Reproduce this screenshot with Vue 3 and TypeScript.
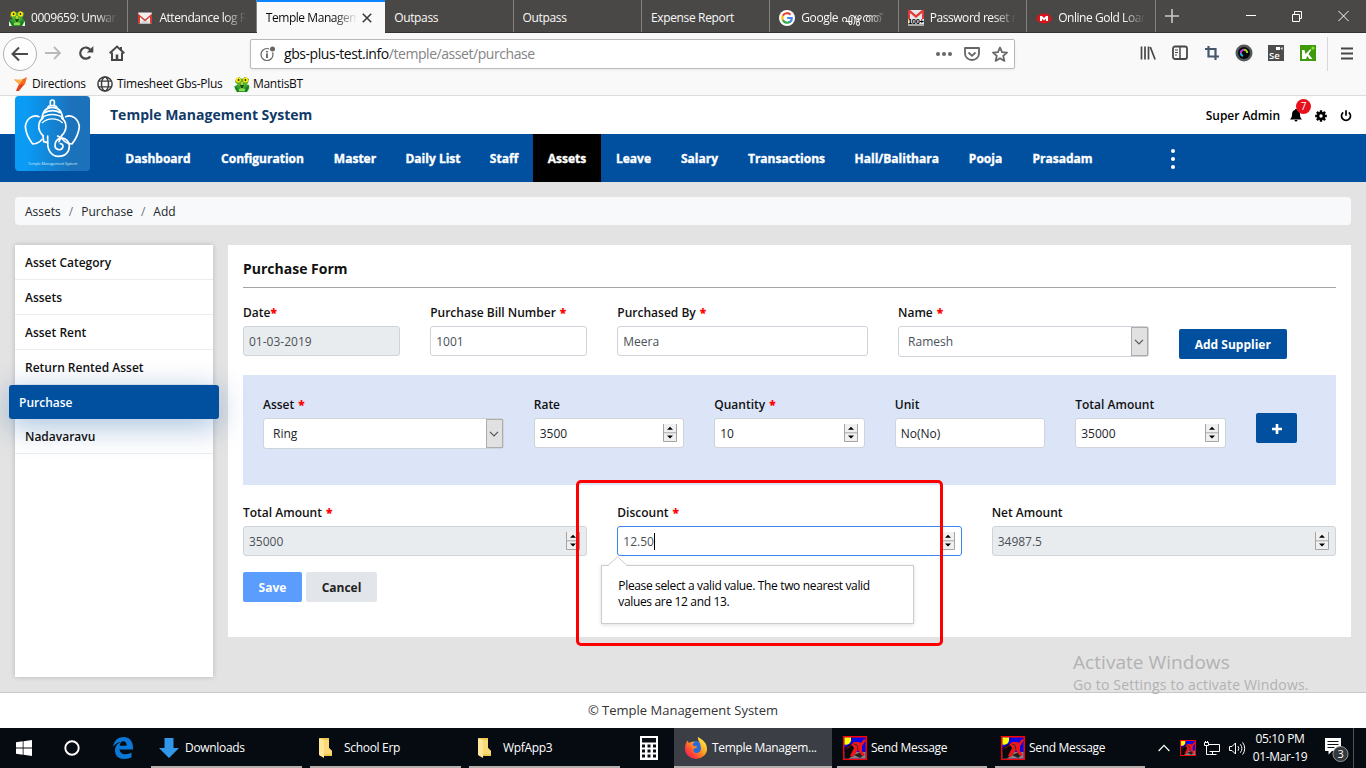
<script setup lang="ts">
interface Tab { title: string; icon?: string; active?: boolean }
const tabs: Tab[] = [
  { title: '0009659: Unwanted', icon: 'mantis' },
  { title: 'Attendance log Report', icon: 'gmail' },
  { title: 'Temple Management', active: true },
  { title: 'Outpass' },
  { title: 'Outpass' },
  { title: 'Expense Report' },
  { title: 'Google എഴുത്ത്', icon: 'google' },
  { title: 'Password reset req', icon: 'gmail100' },
  { title: 'Online Gold Loan', icon: 'muthoot' },
]
const nav = ['Dashboard', 'Configuration', 'Master', 'Daily List', 'Staff', 'Assets', 'Leave', 'Salary', 'Transactions', 'Hall/Balithara', 'Pooja', 'Prasadam']
const side = ['Asset Category', 'Assets', 'Asset Rent', 'Return Rented Asset', 'Purchase', 'Nadavaravu']
interface Field { label: string; value: string; req?: boolean; kind: 'text' | 'number' | 'select'; disabled?: boolean; span: string; tight?: boolean; focus?: boolean }
const top: Field[] = [
  { label: 'Date', value: '01-03-2019', req: true, tight: true, kind: 'text', disabled: true, span: 'c2' },
  { label: 'Purchase Bill Number', value: '1001', req: true, kind: 'text', span: 'c2' },
  { label: 'Purchased By', value: 'Meera', req: true, kind: 'text', span: 'c3' },
  { label: 'Name', value: 'Ramesh', req: true, kind: 'select', span: 'c3' },
]
const items: Field[] = [
  { label: 'Asset', value: 'Ring', req: true, kind: 'select', span: 'c3' },
  { label: 'Rate', value: '3500', kind: 'number', span: 'c2' },
  { label: 'Quantity', value: '10', req: true, kind: 'number', span: 'c2' },
  { label: 'Unit', value: 'No(No)', kind: 'text', span: 'c2' },
  { label: 'Total Amount', value: '35000', kind: 'number', span: 'c2' },
]
const totals: Field[] = [
  { label: 'Total Amount', value: '35000', req: true, kind: 'number', disabled: true, span: 'c4' },
  { label: 'Discount', value: '12.50', req: true, kind: 'number', focus: true, span: 'c4' },
  { label: 'Net Amount', value: '34987.5', kind: 'number', disabled: true, span: 'c4' },
]
const rows = [
  { cls: 'row-top', fields: top },
  { cls: 'row-items', fields: items },
  { cls: 'row-totals', fields: totals },
]
</script>

<template>
  <div class="screen">
    <svg width="0" height="0" class="defs">
      <defs>
        <symbol id="mantis" viewBox="0 0 16 16">
          <path d="M0 16l1-6 4-2h6l4 1 1 7z" fill="#2f9e2c" /><path d="M2 3l3-2 3 2 3-2 4 2-1 4-3 3-3 4-3-4-4-4z" fill="#58b030" />
          <path d="M0 10l3 2 2 4H3zM15 9l-3 3-1 4h2z" fill="#157a25" /><path d="M6 9l2 5 2-5z" fill="#174f16" />
          <path d="M0 11l3 5H0zM16 11l-3 5h3z" fill="#e9f7df" /><path d="M5 13l3-1 3 1v2H5z" fill="#8fdc4e" />
          <circle cx="4.400" cy="4" r="2.500" fill="#ffe600" /><circle cx="11.600" cy="4" r="2.500" fill="#ffe600" />
          <circle cx="4.600" cy="4" r=".9" fill="#222" /><circle cx="11.400" cy="4" r=".9" fill="#222" /><path d="M7 6h2l-.5 3h-1z" fill="#d3e02a" />
        </symbol>
        <symbol id="gmail" viewBox="0 0 16 16">
          <rect x="1" y="2.500" width="14" height="11" rx="1" fill="#f1f1f1" /><path d="M3 13.500L8 8l5 5.500z" fill="#d8d8d8" />
          <path d="M1 13.500V3.500L8 9.500l7-6v10h-2V7L8 11.200 3 7v6.500z" fill="#d93a2f" />
        </symbol>
        <symbol id="google" viewBox="0 0 16 16">
          <circle cx="8" cy="8" r="8" fill="#fff" />
          <g fill="none" stroke-width="2.200"><path d="M3.800 5.800A4.800 4.800 0 0 1 11.500 4.700" stroke="#ea4335" /><path d="M3.900 10.200a4.800 4.800 0 0 1 0-4.500" stroke="#fbbc05" /><path d="M3.900 10a4.800 4.800 0 0 0 7.300 1.700" stroke="#34a853" /><path d="M11 11.900A4.800 4.800 0 0 0 12.800 8H8.200" stroke="#4285f4" /></g>
        </symbol>
        <symbol id="gmail100" viewBox="0 0 16 16">
          <rect width="16" height="16" fill="#e6e6e6" /><path d="M0 9V0h2l6 5 6-5h2v9h-2V3L8 8 2 3v6z" fill="#df3a36" />
          <rect y="14" width="16" height="2" fill="#a9a9a9" />
          <text x="0" y="13.500" font-size="7.500" font-weight="700" font-family="Liberation Sans, sans-serif" textLength="16" fill="#000">100+</text>
        </symbol>
        <symbol id="muthoot" viewBox="0 0 16 16">
          <ellipse cx="8" cy="8.500" rx="7.500" ry="5" fill="#d8141c" /><path d="M4 11V6h2l2 2 2-2h2v5h-2V8.800L8 10.600 6 8.800V11z" fill="#fff" />
        </symbol>
        <symbol id="folder" viewBox="0 0 16 22">
          <path d="M2 1h9v10l3 3v5H2z" fill="#f2c94f" /><path d="M1 1l5 2v18l-5-3z" fill="#ffe79a" /><path d="M6 3h5v8l3 3v3H6z" fill="#fad976" />
        </symbol>
        <symbol id="sendmsg" viewBox="0 0 24 24">
          <rect x=".75" y=".75" width="22.500" height="22.500" fill="#0808e8" stroke="#f00" stroke-width="1.500" />
          <path d="M1.500 16h21v6.500h-21z" fill="#858585" /><path d="M1.500 12l6-4 5 4-1 7-6 3.500h-4z" fill="#080808" /><path d="M11 19l7-3 3 3-4 3z" fill="#222" />
          <path d="M1.500 1.500H8v3a5 5 0 0 1-6.500 4z" fill="#ff0" />
          <path d="M2 13l5-3 4-4h5l2 1 3-4 2 1-4 6 0 5 3 4-3 1-4-6-5 7-3-1 4-8-2-3-4 3z" fill="#f21515" />
          <path d="M11 8l3 1 1 5" stroke="#333" stroke-width="1" fill="none" />
        </symbol>
      </defs>
    </svg>

    <!-- browser tabs -->
    <div class="tabbar">
      <div v-for="(t, i) in tabs" :key="i" class="tab" :class="{ active: t.active }">
        <svg v-if="t.icon" width="16" height="16"><use :href="'#' + t.icon" /></svg>
        <span class="tab-title">{{ t.title }}</span>
        <svg v-if="t.active" class="tab-x" width="10" height="10" viewBox="0 0 10 10"><path d="M.8.8l8.400 8.400M9.200.8L.8 9.200" stroke="#3c3c3c" stroke-width="1.600" /></svg>
      </div>
      <svg class="plus" width="14" height="14" viewBox="0 0 14 14"><path d="M7 0v14M0 7h14" stroke="#c9c9c8" stroke-width="1.600" /></svg>
      <svg class="win-btns" width="104" height="12" viewBox="0 0 104 12" fill="none" stroke="#fff"><path d="M0 5.500h10" /><path d="M46.500 4.500h7v7h-7zM48.500 4v-2.500h7v7H54" /><path d="M92.500 1l10 10M102.500 1l-10 10" /></svg>
    </div>

    <!-- browser toolbar -->
    <div class="toolbar">
      <div class="back"><svg width="18" height="16" viewBox="0 0 18 16" fill="none" stroke="#4a4a4a" stroke-width="2"><path d="M1.500 8H17M8 1.500L1.500 8 8 14.500" /></svg></div>
      <svg class="fwd" width="17" height="14" viewBox="0 0 17 14" fill="none" stroke="#b9b9ba" stroke-width="1.800"><path d="M0 7h15M9 1l6 6-6 6" /></svg>
      <svg class="reload" width="16" height="16" viewBox="0 0 16 16"><path d="M12.300 11.500A5.600 5.600 0 1 1 12.500 5" fill="none" stroke="#474747" stroke-width="2.200" /><path d="M15.300 1v6.500H8.800z" fill="#474747" /></svg>
      <svg class="home" width="16" height="16" viewBox="0 0 16 16" fill="none" stroke="#474747"><path d="M.7 8.200L8 1.500l7.300 6.700" stroke-width="2" /><path d="M3 7.500V15h10V7.500M12 2v3" stroke-width="2" /><path d="M8 9.500V15" stroke-width="2.600" /></svg>
      <div class="url">
        <svg class="info" width="16" height="16" viewBox="0 0 16 16"><circle cx="7" cy="8.500" r="6" fill="none" stroke="#666" stroke-width="1.200" /><path d="M7 7.500V12M7 5v1.400" stroke="#555" stroke-width="1.700" /><circle cx="12.500" cy="3" r="3.400" fill="#fff" /><circle cx="12.500" cy="3" r="2.500" fill="#666" /></svg>
        <span class="addr"><b>gbs-plus-test.info</b>/temple/asset/purchase</span>
        <svg class="url-icons" width="72" height="16" viewBox="0 0 72 16" fill="none" stroke="#666" stroke-width="1.800"><g fill="#666" stroke="none"><circle cx="2" cy="8" r="2" /><circle cx="8" cy="8" r="2" /><circle cx="14" cy="8" r="2" /></g><path d="M29 2h14v5.500a7 6.500 0 0 1-14 0z" stroke-linejoin="round" /><path d="M32.500 6.500L36 9.800l3.500-3.300" /><path d="M64 1.500l2 4.700 5 .4-3.800 3.300 1.200 5L64 12.200l-4.400 2.700 1.200-5L57 6.600l5-.4z" stroke-linejoin="round" /></svg>
      </div>
      <div class="ext">
        <svg width="16" height="16" viewBox="0 0 16 16" stroke="#474747" stroke-width="1.700" fill="none"><path d="M1.500 1.500v13M5 1.500v13M8.500 1.500v13M10.300 2l4.800 12.500" /></svg>
        <svg width="16" height="16" viewBox="0 0 16 16" stroke="#474747" fill="none"><rect x="1" y="1.500" width="14" height="12.500" rx="2" stroke-width="1.800" /><path d="M8 2v12" stroke-width="1.500" /><path d="M3 5h3M3 7.500h3M3 10h2" stroke-width="1" /></svg>
        <svg width="16" height="16" viewBox="0 0 16 16" stroke="#47586b" fill="none" stroke-width="2.200"><path d="M1 4h10.500v11M4.500 1v10.500H15" /></svg>
        <svg width="18" height="18" viewBox="0 0 18 18"><circle cx="9" cy="9" r="8.500" fill="#55585a" /><circle cx="9" cy="9" r="6" fill="#07090b" /><path d="M5.800 9A3.200 3.200 0 0 1 9 5.800" stroke="#bb39c8" stroke-width="2" fill="none" /><path d="M9 5.800A3.200 3.200 0 0 1 12.200 9" stroke="#a6cf25" stroke-width="2" fill="none" /><path d="M5.800 9A3.200 3.200 0 0 0 8 12" stroke="#24a9e0" stroke-width="2" fill="none" /></svg>
        <svg width="16" height="16" viewBox="0 0 16 16"><rect width="16" height="16" fill="#4d4d4d" /><path d="M8 2h4v3H8zM12.500 3.500L14.500 2v3z" fill="#fff" /><text x="1" y="14" font-family="Open Sans, sans-serif" font-size="9.500" font-weight="600" letter-spacing="0" fill="#fff">Se</text></svg>
        <svg width="16" height="16" viewBox="0 0 16 16"><rect width="16" height="16" fill="#3f9b0b" /><path d="M2 5l2.500 0 1 4 4.500-4.500h1.500L8.500 9l4 5H9.500L7.200 11 6 14H2z" fill="#fff" /><circle cx="13" cy="3" r="1.600" fill="#8be33a" /></svg>
      </div>
      <div class="burger"><svg width="12" height="13" viewBox="0 0 12 13" stroke="#474747" stroke-width="2"><path d="M0 1.500h12M0 6.500h12M0 11.500h12" /></svg></div>
    </div>

    <div class="bookmarks">
      <svg width="16" height="16" viewBox="0 0 16 16"><path d="M1 3.500l6 1 7-3.500-2 7-7 7H3l3-7z" fill="#f36a21" /><path d="M1 3.500h9L6.500 8z" fill="#ffb14a" /><path d="M3 15l3-6 5-1-5 7z" fill="#e2401b" /></svg>
      <span class="bm bm1">Directions</span>
      <svg width="16" height="16" viewBox="0 0 16 16" fill="none" stroke="#3e3e3e" stroke-width="1.500"><circle cx="8" cy="8" r="7.100" /><ellipse cx="8" cy="8" rx="3.500" ry="7" /><path d="M2 5.200h12M2 10.800h12" stroke-width="1.300" /></svg>
      <span class="bm bm2">Timesheet Gbs-Plus</span>
      <svg width="16" height="16"><use href="#mantis" /></svg>
      <span class="bm bm3">MantisBT</span>
    </div>

    <!-- application -->
    <header class="head">
      <div class="logo">
        <svg width="75" height="75" viewBox="0 0 225 225">
          <defs><linearGradient id="lg"><stop offset=".15" stop-color="#0a9bf5" /><stop offset=".75" stop-color="#1b72bb" /></linearGradient></defs>
          <rect width="225" height="225" rx="11" fill="url(#lg)" />
          <g fill="none" stroke="#fff" stroke-width="5" stroke-linecap="round" stroke-linejoin="round">
            <path d="M106 28v-10c0-8 12-8 12 0v10M98 36c0-10 28-10 28 0" />
            <path d="M81 68c2-24 12-34 31-34s29 10 31 34M88 50c16-8 32-8 48 0" />
            <path d="M80 66c18-14 46-14 64 0" />
            <path d="M84 119c-18-17-16-42 0-53M140 119c18-17 16-42 0-53" />
            <path d="M72 62c-18-8-38 6-41 30 2 22 14 42 22 52 8-1 22-4 28-14" />
            <path d="M152 62c18-8 38 6 41 30-2 22-14 42-22 52-8-1-22-4-28-14" />
            <path d="M82 80c16-15 44-15 60 0" stroke-width="4" />
            <path d="M84 119l2 18 12 3c0 24 12 41 32 41 22 0 33-14 33-30 0-17-14-27-27-24-18 4-22 31-5 34 13 2 19-17 5-18" />
            <path d="M98 120v20M128 120l14 8M140 119l-8 18" />
          </g>
          <text x="39" y="207" font-family="Open Sans, sans-serif" font-size="12" fill="#cfe9fb" textLength="148">Temple Management System</text>
        </svg>
      </div>
      <h1>Temple Management System</h1>
      <div class="user">
        <span class="uname">Super Admin</span>
        <span class="bell"><svg width="12" height="13" viewBox="0 0 12 13"><path d="M6 0c.8 0 1 .5 1 1 2 .5 3 2 3 4.500 0 3 .8 3.500 2 5H0c1.200-1.500 2-2 2-5C2 3 3 1.500 5 1c0-.5.200-1 1-1zM4.500 11h3a1.500 1.500 0 0 1-3 0z" /></svg><i>7</i></span>
        <svg class="gear" width="12" height="12" viewBox="0 0 12 12"><circle cx="6" cy="6" r="3" fill="none" stroke="#000" stroke-width="2.600" /><path d="M6 .2v2M6 9.800v2M.2 6h2M9.800 6h2M1.900 1.900l1.400 1.400M8.700 8.700l1.400 1.400M1.900 10.100l1.400-1.400M8.700 3.300l1.400-1.400" stroke="#000" stroke-width="2.400" /></svg>
        <svg class="power" width="12" height="12" viewBox="0 0 12 12" fill="none" stroke="#000" stroke-width="1.700"><path d="M3.200 2.300a4.500 4.500 0 1 0 5.600 0M6 .3v5.400" /></svg>
      </div>
    </header>
    <nav class="nav">
      <a v-for="n in nav" :key="n" :class="{ on: n === 'Assets' }">{{ n }}</a>
      <svg class="dots" width="4" height="20" viewBox="0 0 4 20" fill="#fff"><circle cx="2" cy="2" r="2" /><circle cx="2" cy="10" r="2" /><circle cx="2" cy="18" r="2" /></svg>
    </nav>

    <div class="page">
      <div class="crumbs"><span>Assets</span><i>/</i><span>Purchase</span><i>/</i><span>Add</span></div>
      <div class="columns">
        <aside><a v-for="s in side" :key="s" :class="{ on: s === 'Purchase' }">{{ s }}</a></aside>
        <main>
          <h2>Purchase Form</h2>
          <div v-for="(r, ri) in rows" :key="ri" class="row" :class="r.cls">
            <div v-for="f in r.fields" :key="f.label" class="col" :class="f.span">
              <label>{{ f.label }}<b v-if="f.req" :class="{ tight: f.tight }">*</b></label>
              <div class="input" :class="[f.kind, { disabled: f.disabled, focus: f.focus }]">
                <span>{{ f.value }}</span><i v-if="f.focus" class="caret"></i>
                <svg v-if="f.kind === 'number'" class="spin" width="14" height="18" viewBox="0 0 14 18"><path d="M0 0h14v18H0z" fill="#f0f0f0" /><path d="M.5 0v17.500h13V0M0 8.800h14" fill="none" stroke="#a5a5a5" /><path d="M4 5.800h6L7 2.800zM4 11.500h6l-3 3z" fill="#000" /></svg>
                <i v-if="f.kind === 'select'" class="drop"><svg width="10" height="6" viewBox="0 0 10 6"><path d="M1 .8l4 4 4-4" fill="none" stroke="#555" stroke-width="1.200" /></svg></i>
              </div>
              <div v-if="f.focus" class="tip">
                <svg width="20" height="10" viewBox="0 0 20 10"><path d="M0 9.500L9.500.8 19 9.500" fill="#fff" stroke="#ccc" /><path d="M1 9.500h17" stroke="#fff" stroke-width="1.500" /></svg>
                Please select a valid value. The two nearest valid<br />values are 12 and 13.
              </div>
            </div>
            <button v-if="ri === 0" class="btn supplier">Add Supplier</button>
            <button v-if="ri === 1" class="btn add"><svg width="10" height="10" viewBox="0 0 10 10"><path d="M5 0v10M0 5h10" stroke="#fff" stroke-width="2.600" /></svg></button>
          </div>
          <div class="actions"><button class="btn save">Save</button><button class="btn cancel">Cancel</button></div>
        </main>
      </div>
    </div>
    <footer>© Temple Management System</footer>

    <div class="marker"></div>
    <div class="watermark"><p>Activate Windows</p><span>Go to Settings to activate Windows.</span></div>

    <!-- desktop taskbar -->
    <div class="taskbar">
      <div class="sys"><svg width="16" height="16" viewBox="0 0 16 16" fill="#fff"><path d="M0 2.300L6.700 1.300v6.300H0zM7.500 1.200L16 0v7.600H7.500zM0 8.400h6.700v6.300L0 13.700zM7.500 8.400H16V16l-8.500-1.200z" /></svg></div>
      <div class="sys"><svg width="16" height="16" viewBox="0 0 16 16"><circle cx="8" cy="8" r="6.700" fill="none" stroke="#fff" stroke-width="1.900" /></svg></div>
      <div class="sys edge"><svg width="20" height="22" viewBox="0 0 20 22"><path d="M0 10C1 3.500 5 0 10.500 0 17 0 20 5 20 10v2.500H6.500c.3 3 2.700 4.800 6 4.800 2.300 0 4.200-.6 6-1.700v4.700C16.500 21.500 14 22 11.500 22 5.500 22 2 18.500 2 13.500c0-4 2.300-7 5.800-8.500C4.500 5.200 2 7 0 10zm6.700-1.200h7c0-3-1.200-4.500-3.500-4.500-2 0-3.200 1.800-3.500 4.500z" fill="#0a78d7" /></svg></div>
      <div class="task"><svg width="20" height="20" viewBox="0 0 20 20"><path d="M5.500 0h9v10H20L10 20 0 10h5.500z" fill="#3197e8" /></svg><span class="t1">Downloads</span></div>
      <div class="task"><svg width="16" height="22"><use href="#folder" /></svg><span class="t2">School Erp</span></div>
      <div class="task"><svg width="16" height="22"><use href="#folder" /></svg><span class="t3">WpfApp3</span></div>
      <div class="calc"><svg width="18" height="24" viewBox="0 0 18 24"><path d="M0 0h18v24H0z" fill="#fff" /><path d="M2 2h14v4.500H2zM2 8.500h3v3H2zM7.500 8.500h3v3h-3zM13 8.500h3v3h-3zM2 13.500h3v3H2zM7.500 13.500h3v3h-3zM13 13.500h3v3h-3zM2 18.500h3v3H2zM7.500 18.500h3v3h-3zM13 18.500h3v3h-3z" fill="#0a0d12" /></svg></div>
      <div class="task ff"><svg width="22" height="22" viewBox="0 0 22 22">
        <defs><linearGradient id="fx" x1="1" y1="0" x2="0" y2="1"><stop offset=".1" stop-color="#fff04a" /><stop offset=".45" stop-color="#ff9a1c" /><stop offset=".75" stop-color="#ff3b3b" /><stop offset="1" stop-color="#d8147c" /></linearGradient></defs>
        <circle cx="11" cy="12" r="8" fill="#2b6bd8" /><path d="M13 0c5 3 9 6 9 12a11 10 0 0 1-22 0c0-4 1-6 2.500-8.500L4 6c2-1.500 4-1.500 6-1-2 1-3.500 2.500-1 4l3 .5c0 2-3 1.500-3.500 3C8 15 10 16.500 12.500 16c3.500-.7 4-4 3-7 0-4-3.500-6-2.500-9z" fill="url(#fx)" /></svg><span class="t4">Temple Managem...</span></div>
      <div class="task send"><svg width="24" height="24"><use href="#sendmsg" /></svg><span class="t5">Send Message</span></div>
      <div class="task send"><svg width="24" height="24"><use href="#sendmsg" /></svg><span class="t5">Send Message</span></div>
      <div class="tray">
        <svg class="chev" width="12" height="8" viewBox="0 0 12 8"><path d="M.6 7L6 1.400 11.400 7" fill="none" stroke="#fff" stroke-width="1.200" /></svg>
        <svg width="16" height="16"><use href="#sendmsg" /></svg>
        <svg width="17" height="15" viewBox="0 0 17 15" fill="none" stroke="#fff"><path d="M5 3.500h10.500v7h-10M8.500 11v3M5.500 13.500h7M.5 1.500h4v3h-4zM2.500 4.500v9h3M1.500 0v1M3.500 0v1" /></svg>
        <svg width="17" height="15" viewBox="0 0 17 15" fill="none" stroke="#fff"><path d="M.5 5.500h2.500L6.500 2v11L3 9.500H.5zM9 5.200a4 4 0 0 1 0 4.600M11.300 3.300a7 7 0 0 1 0 8.400M13.600 1.400a10 10 0 0 1 0 12.200" /></svg>
      </div>
      <div class="clock"><span>05:10 PM</span><span>01-Mar-19</span></div>
      <div class="note"><svg width="26" height="26" viewBox="0 0 26 26"><path d="M1 1h16v13H8l-3.500 3.500V14H1z" fill="#fff" /><path d="M3.500 4.500h11M3.500 7.500h11M3.500 10.500h7" stroke="#111" /><circle cx="16.500" cy="17" r="7.500" fill="#35383b" stroke="#999" /><text x="16.500" y="21" text-anchor="middle" font-size="11" font-family="Open Sans, sans-serif" fill="#fff">3</text></svg></div>
      <div class="peek"></div>
    </div>
  </div>
</template>

<style>
body { margin: 0; overflow: hidden; }
</style>

<style scoped>
* { box-sizing: border-box; }
.screen { position: relative; width: 1366px; height: 768px; overflow: hidden; display: flex; flex-direction: column; background: #e3e3e3; font-family: "Open Sans", "Noto Sans", sans-serif; font-size: 12px; color: #212529; line-height: 16px; }
.defs { position: absolute; }
svg { display: block; flex: none; }
i { font-style: normal; }

.tabbar { height: 33px; flex: none; display: flex; align-items: center; background: #4a4846; border-bottom: 1px solid #333; color: #f9f9fa; }
.tab { width: 128.400px; flex: none; height: 32px; padding: 3px 10px 0 9px; display: flex; align-items: center; border-right: 1px solid #84827f; overflow: hidden; }
.tab svg { margin-right: 6px; }
.tab-title { flex: 1; overflow: hidden; white-space: nowrap; letter-spacing: -.35px; font-weight: 500; mask-image: linear-gradient(to right, #000 75%, transparent); }
.tab:has(> svg) .tab-title { letter-spacing: -.45px; }
.tab:nth-child(n+4):nth-child(-n+6) .tab-title { mask-image: none; }
.tab.active { background: #f9f9fa; color: #0c0c0d; height: 33px; margin-bottom: -1px; border-top: 2px solid #0a84ff; padding-top: 0; border-right: 0; }
.tab.active svg { margin: 0 3px 0 5px; }
.plus { margin-left: 9px; }
.win-btns { margin-left: auto; margin-right: 16px; }

.toolbar { height: 39px; flex: none; display: flex; align-items: center; background: #f9f9fa; }
.back { width: 34px; height: 34px; margin: 2px 0 0 3px; border: 1px solid #b1b1b3; border-radius: 50%; background: #fdfdfd; display: flex; align-items: center; justify-content: center; }
.fwd { margin-left: 8px; margin-top: 1px; }
.reload { margin-left: 16px; margin-top: 1px; }
.home { margin-left: 15px; margin-top: 1px; }
.url { width: 765px; height: 30px; margin: 2px 0 0 125px; border: 1px solid #b9b9bb; border-radius: 2px; background: #fff; display: flex; align-items: center; padding-left: 9px; box-shadow: 0 1px 3px #0001; }
.addr { margin-left: 8px; font-size: 14px; color: #838386; letter-spacing: -.44px; white-space: nowrap; padding-top: 1px; }
.addr b { color: #0c0c0d; font-weight: 400; }
.url-icons { margin-left: auto; margin-right: 6px; }
.ext { display: flex; gap: 16px; margin-left: 125px; align-items: center; }
.ext svg:nth-child(4) { margin: 0 -1px; }
.burger { border-left: 1px solid #d7d7db; height: 34px; margin: 2px 0 0 11px; padding-left: 13px; display: flex; align-items: center; }

.bookmarks { height: 24px; flex: none; display: flex; align-items: center; padding: 0 0 0 13px; background: #f9f9fa; border-bottom: 1px solid #dcdcdc; color: #0c0c0d; white-space: nowrap; }
.bm { margin-left: 3px; letter-spacing: -.3px; }
.bm1 { width: 65px; } .bm2 { width: 117px; margin-left: 4px; letter-spacing: -.27px; }

.head { height: 38px; flex: none; display: flex; align-items: center; background: #fff; padding: 0 14px 0 15px; }
.logo { width: 75px; height: 75px; align-self: flex-start; position: relative; z-index: 2; flex: none; }
h1 { margin: 0 0 0 20px; font-size: 14px; font-weight: 700; color: #103a68; line-height: 20px; }
.user { margin-left: auto; display: flex; align-items: center; color: #000; padding-top: 1px; }
.uname { font-weight: 600; letter-spacing: -.05px; }
.bell { position: relative; margin-left: 10px; }
.bell i { position: absolute; left: 6px; top: -10px; width: 15px; height: 15px; border-radius: 50%; background: #e8101c; color: #fff; font-size: 10px; line-height: 15px; text-align: center; }
.gear { margin-left: 13px; } .power { margin-left: 13px; }

.nav { height: 48px; flex: none; background: #00509f; display: grid; grid-template-columns: 96px 113px 72px 84px 58px 68px 65px 67px 107px 113.500px 64px 200px 4px; padding-left: 110px; align-items: center; justify-items: stretch; }
.nav a { color: #fff; font-weight: 700; -webkit-text-stroke: .35px #fff; line-height: 48px; padding: 1px 0 0; height: 48px; text-align: center; white-space: nowrap; }
.nav a:nth-child(12) { text-align: left; padding-left: 15px; }
.nav a.on { background: #000; }
.dots { margin: 2px 0 0 -47px; }
.nav .dots { justify-self: start; }

.page { height: 510px; flex: none; padding: 15px 15px 0; }
.crumbs { height: 28px; background: #f8f9fb; border-radius: 4px; padding-left: 10px; display: flex; align-items: center; color: #212529; padding-top: 1px; }
.crumbs i { margin: 0 8px; color: #6c757d; }
.columns { display: flex; margin-top: 20px; gap: 15px; align-items: flex-start; }
aside { width: 198px; height: 432px; flex: none; background: #fff; box-shadow: 0 0 5px #0003; }
aside a { display: block; height: 35px; border-bottom: 1px solid #ececec; padding-left: 10px; line-height: 35px; font-weight: 600; color: #111; }
aside a.on { position: relative; height: 34px; line-height: 36px; width: 210px; margin-left: -6px; background: #00509f; color: #fff; border: 0; border-radius: 3px; box-shadow: 0 10px 30px #00509f40, 0 0 30px #00509f20; margin-bottom: 0; }
aside a:last-child { position: relative; }
main { width: 1123px; height: 392px; background: #fff; padding: 0 15px; }
h2 { margin: 0; height: 43px; border-bottom: 1px solid #a3a3a3; font-size: 14px; font-weight: 700; line-height: 47px; color: #111; }
.row { display: flex; margin: 0 -15px; padding-top: 16px; height: 87px; align-items: flex-start; }
.row-items { margin: 0; background: #dce5f8; height: 110px; padding: 21px 5px 0; color: #111; }
.row-totals { height: 87px; padding-top: 19px; }
.col { padding: 0 15px; flex: none; position: relative; }
.c2 { width: 16.6667%; } .c3 { width: 25%; } .c4 { width: 33.3333%; }
label { display: block; height: 22px; line-height: 17px; font-weight: 600; color: #111; white-space: nowrap; }
label b { color: #f00; margin-left: 4px; } label b.tight { margin-left: 0; }
.input { height: 30px; border: 1px solid #ced4da; border-radius: 3px; background: #fff; display: flex; align-items: center; padding: 0 6px 0 5px; color: #495057; }
.input.text > span, .input.number > span { padding-top: 2px; }
.row-items .input { color: #212529; }
.input.select { height: 31px; padding: 0 0 0 9px; }
.input.disabled { background: #e9ecef; }
.input.focus { border-color: #3a86ee; }
.spin { margin-left: auto; }
.caret { width: 1px; height: 17px; background: #000; }
.drop { margin-left: auto; width: 17px; height: 29px; border: 1px solid #adadad; background: #e1e1e1; display: flex; align-items: center; justify-content: center; }
.tip { position: absolute; left: -1px; top: 61px; width: 313px; height: 59px; background: #fff; border: 1px solid #ccc; box-shadow: 0 1px 4px #0002; padding: 12px 0 0 16px; color: #000; white-space: nowrap; letter-spacing: -.35px; }
.tip svg { position: absolute; left: 6px; top: -10px; }
.btn { border: 0; border-radius: 2px; height: 30px; padding: 2px 0 0; font: 700 12px/28px "Open Sans", sans-serif; color: #fff; background: #00509f; flex: none; text-align: center; }
.supplier { width: 108px; margin: 25px 0 0 15px; }
.add { width: 41px; margin: 17px 0 0 15px; display: flex; align-items: center; justify-content: center; padding: 1px 0 0 1px; }
.actions { display: flex; gap: 4px; }
.save { width: 59px; background: #5a9dfd; } .cancel { width: 71px; background: #e2e6ea; color: #222; }

footer { height: 36px; flex: none; border-top: 1px solid #c8c8c8; background: #fff; text-align: center; font-size: 13px; line-height: 35px; color: #333; }
.marker { position: absolute; left: 576px; top: 480px; width: 367px; height: 166px; border: 3px solid #f00; border-radius: 5px; }
.watermark { position: absolute; left: 1073px; top: 650px; color: #b2b2b2; white-space: nowrap; }
.watermark p { margin: 0; font-size: 19px; line-height: 24px; letter-spacing: .05px; }
.watermark span { display: block; font-size: 14px; line-height: 22px; letter-spacing: .18px; }

.taskbar { height: 40px; flex: none; background: #060b11; color: #fff; display: flex; align-items: center; white-space: nowrap; letter-spacing: -.32px; }
.sys { width: 48px; flex: none; display: flex; justify-content: center; }
.edge { width: 55px; margin-right: 0; padding-right: 1px; }
.task { width: 151px; height: 40px; flex: none; border-bottom: 2px solid #b5afad; display: flex; align-items: center; padding: 2px 0 0 8px; margin-right: 8px; }
.task span { margin-left: 6px; }
.task .t2, .task .t3 { margin-left: 10px; }
.calc { width: 46px; flex: none; display: flex; justify-content: center; padding-right: 4px; }
.ff { width: 158px; background: #3b3e45; padding-left: 11px; margin-right: 5px; }
.ff .t4 { margin-left: 5px; }
.send { width: 150px; padding-left: 6px; }
.send .t5 { margin-left: 4px; }
.tray { display: flex; align-items: center; gap: 8px; margin-left: 5px; }
.chev { margin-right: 2px; }
.clock { width: 72px; display: flex; flex-direction: column; align-items: center; line-height: 18px; flex: none; margin-left: -2px; }
.note { margin-left: 8px; padding-top: 4px; }
.peek { width: 1px; height: 40px; background: #50545a; margin-left: 3px; }
</style>
